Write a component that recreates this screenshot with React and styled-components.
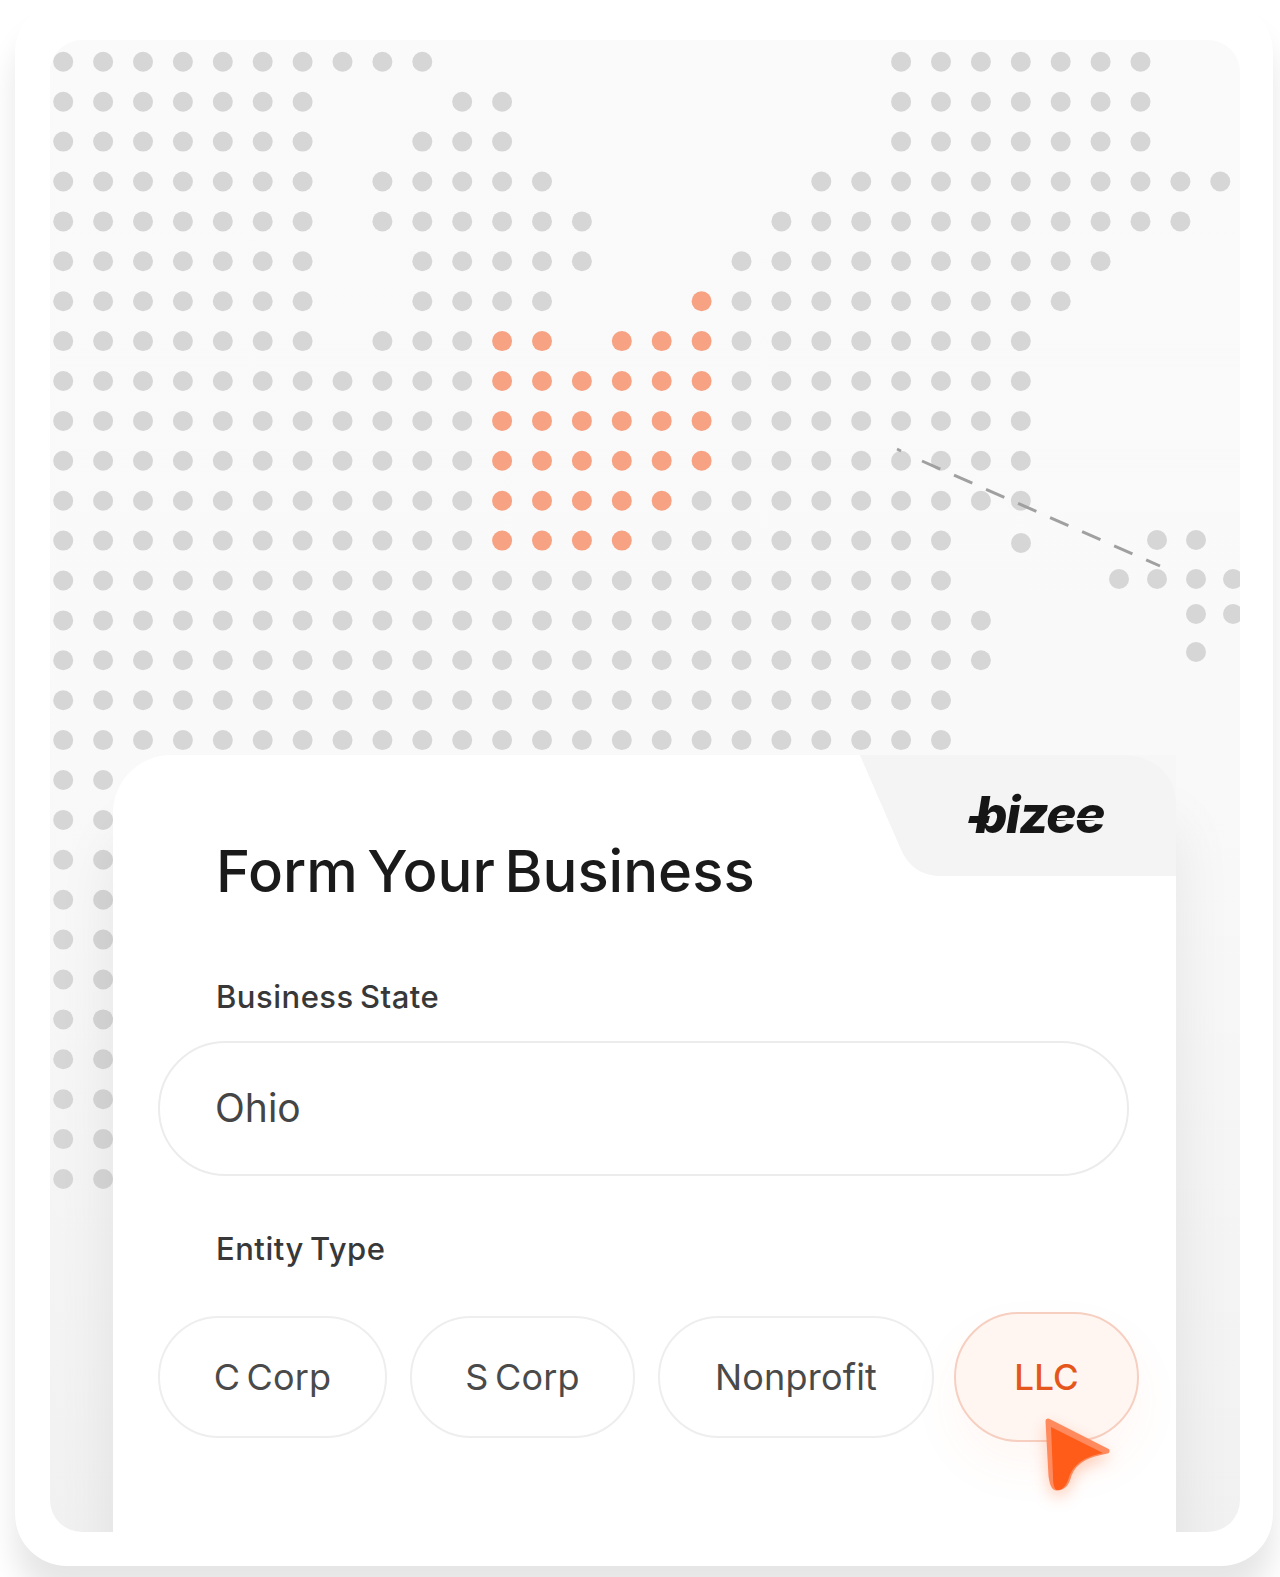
import React from "react";
import styled, { createGlobalStyle } from "styled-components";

const Global = createGlobalStyle`
  html, body { margin: 0; padding: 0; background: #fff; }
  body { font-family: "Inter", "Liberation Sans", sans-serif; }
  * { box-sizing: border-box; }
`;

const Page = styled.div`
  width: 1280px;
  height: 1577px;
  padding: 0 7px 11px 15px;
  overflow: hidden;
  background: #fff;
`;

const Shell = styled.div`
  height: 1566px;
  padding: 40px 33px 34px 35px;
  background: #fff;
  border-radius: 52px;
  box-shadow: 0 30px 30px rgba(0, 0, 0, 0.1);
`;

const Panel = styled.div`
  height: 1492px;
  display: grid;
  grid-template: 1fr / 1fr;
  overflow: hidden;
  border-radius: 32px;
  background: linear-gradient(180deg, #fafafa 0%, #f9f9f9 50%, #f1f1f1 100%);
`;

const MapSvg = styled.svg`
  grid-area: 1 / 1;
  display: block;
  width: 1190px;
  height: 1200px;
  filter: blur(0.4px);
`;

const FormCard = styled.section`
  grid-area: 1 / 1;
  position: relative;
  margin: 715px 64px 0 63px;
  padding: 81px 0 0 45px;
  background: #fff;
  border-radius: 58px 0 0 0;
  box-shadow: 0 70px 60px rgba(0, 0, 0, 0.08);
`;

const Tab = styled.div`
  position: absolute;
  top: 0;
  right: 0;
  width: 316px;
  height: 121px;
`;

const TabShape = styled.svg`
  position: absolute;
  inset: 0;
  display: block;
`;

const Logo = styled.div`
  position: absolute;
  left: 115px;
  top: 30px;
  font-family: "Inter", "Liberation Sans", sans-serif;
  font-size: 51px;
  line-height: 60px;
  font-weight: 800;
  font-style: italic;
  letter-spacing: -1.4px;
  color: #161616;
  &::after {
    content: "";
    position: absolute;
    left: 82px;
    top: 33px;
    width: 60px;
    height: 2px;
    background: #f4f4f4;
  }
`;

const LogoBar = styled.span`
  position: absolute;
  left: -6px;
  top: 31px;
  width: 20px;
  height: 7px;
  background: #161616;
  transform: skewX(-14deg);
`;

const Title = styled.h1`
  margin: 0 0 0 58px;
  font-size: 58px;
  line-height: 70px;
  font-weight: 500;
  word-spacing: -6px;
  color: #1a1a1a;
`;

const Label = styled.div`
  margin: ${(p) => p.$top}px 0 0 58px;
  font-size: 31px;
  line-height: 40px;
  font-weight: 500;
  letter-spacing: 0.5px;
  word-spacing: -2.5px;
  color: #383838;
`;

const Field = styled.div`
  width: 971px;
  height: 135px;
  margin-top: 24px;
  padding: 0 0 2px 55px;
  display: flex;
  align-items: center;
  border: 2px solid #ececec;
  border-radius: 68px;
  font-size: 39px;
  font-weight: 400;
  color: #454545;
`;

const PillRow = styled.div`
  display: flex;
  align-items: center;
  gap: 23px;
  height: 122px;
  margin-top: 47px;
`;

const Pill = styled.div`
  flex: none;
  width: ${(p) => p.$w}px;
  height: 122px;
  display: flex;
  align-items: center;
  justify-content: center;
  border: 2px solid #eeeeee;
  border-radius: 61px;
  background: #fff;
  font-size: 36px;
  letter-spacing: 0.2px;
  word-spacing: -4px;
  color: #4a4a4a;
`;

const ActivePill = styled.div`
  position: relative;
  flex: none;
  width: 185px;
  height: 130px;
  margin-left: -3px;
  display: flex;
  align-items: center;
  justify-content: center;
  border: 2px solid #f6cfc0;
  border-radius: 65px;
  background: #fff6f2;
  box-shadow: 0 24px 50px rgba(255, 120, 60, 0.06);
  font-size: 35px;
  font-weight: 500;
  color: #e5561c;
`;

const Cursor = styled.svg`
  position: absolute;
  left: 87px;
  top: 100px;
  overflow: visible;
  filter: drop-shadow(0 6px 8px rgba(255, 95, 31, 0.3));
`;

const RANGES = [
  [[0, 9], [21, 27]],
  [[0, 6], [10, 11], [21, 27]],
  [[0, 6], [9, 11], [21, 27]],
  [[0, 6], [8, 12], [19, 29]],
  [[0, 6], [8, 13], [18, 28]],
  [[0, 6], [9, 13], [17, 26]],
  [[0, 6], [9, 12], [17, 25]],
  [[0, 6], [8, 10], [17, 24]],
  [[0, 10], [17, 24]],
  [[0, 10], [17, 24]],
  [[0, 10], [17, 24]],
  [[0, 10], [16, 24]],
  [[0, 10], [15, 22]],
  [[0, 22]],
  [[0, 23]],
  [[0, 23]],
  [[0, 22]],
  [[0, 22]],
];

const ORANGE = [
  [6, [[16, 16]]],
  [7, [[11, 12], [14, 16]]],
  [8, [[11, 16]]],
  [9, [[11, 16]]],
  [10, [[11, 16]]],
  [11, [[11, 15]]],
  [12, [[11, 14]]],
];

const EXTRA = [
  [1021, 543], [1157, 540], [1196, 540],
  [1119, 579], [1157, 579], [1196, 579], [1233, 579],
  [1196, 614], [1233, 614], [1196, 652],
];

const PITCH = 39.9;
const cx = (c) => 13.2 + c * PITCH;
const cy = (r) => 21.8 + r * PITCH;

function expand(ranges) {
  const out = [];
  ranges.forEach(([a, b]) => {
    for (let c = a; c <= b; c++) out.push(c);
  });
  return out;
}

function DotMap() {
  const gray = [];
  RANGES.forEach((ranges, r) => {
    expand(ranges).forEach((c) => gray.push([cx(c), cy(r)]));
  });
  for (let r = 18; r <= 28; r++) {
    gray.push([cx(0), cy(r)], [cx(1), cy(r)]);
  }
  EXTRA.forEach(([x, y]) => gray.push([x - 50, y - 40]));
  const orange = [];
  ORANGE.forEach(([r, ranges]) => {
    expand(ranges).forEach((c) => orange.push([cx(c), cy(r)]));
  });
  return (
    <MapSvg viewBox="0 0 1190 1200">
      {gray.map(([x, y], i) => (
        <circle key={i} cx={x} cy={y} r="10" fill="#d6d6d6" />
      ))}
      {orange.map(([x, y], i) => (
        <circle key={i} cx={x} cy={y} r="10" fill="#f6a283" />
      ))}
      <line x1="847" y1="409" x2="851" y2="411" stroke="#a0a0a0" strokeWidth="2.6" />
      <line
        x1="872"
        y1="421"
        x2="1110"
        y2="526"
        stroke="#a0a0a0"
        strokeWidth="3"
        strokeDasharray="20 15"
      />
    </MapSvg>
  );
}

export default function App() {
  return (
    <>
      <Global />
      <Page>
        <Shell>
          <Panel>
            <DotMap />
            <FormCard>
              <Tab>
                <TabShape width="316" height="121" viewBox="0 0 316 121">
                  <path d="M0 0H316V121H82C62 121 48 112 40 92Z" fill="#f7f7f7" />
                  <path
                    d="M0 0H262C294 0 316 20 316 48V121H82C62 121 48 112 40 92Z"
                    fill="#f4f4f4"
                  />
                </TabShape>
                <Logo>
                  <LogoBar />
                  bizee
                </Logo>
              </Tab>
              <Title>Form Your Business</Title>
              <Label $top={71}>Business State</Label>
              <Field>Ohio</Field>
              <Label $top={53}>Entity Type</Label>
              <PillRow>
                <Pill $w={229}>C Corp</Pill>
                <Pill $w={225}>S Corp</Pill>
                <Pill $w={276}>Nonprofit</Pill>
                <ActivePill>
                  LLC
                  <Cursor width="70" height="78" viewBox="0 0 70 78">
                    <path
                      d="M5 7L64 37C48 40 32 45 26 61C24 70 20 74 14 74C10 74 9 68 8 62Z"
                      fill="#ff8a5e"
                      stroke="#ff8a5e"
                      strokeWidth="5"
                      strokeLinejoin="round"
                    />
                    <path
                      d="M8 13L60 39C46 42 32 47 26 63C24 71 19 77 14 76C11 75 10 70 10 62Z"
                      fill="#ff5c1a"
                    />
                  </Cursor>
                </ActivePill>
              </PillRow>
            </FormCard>
          </Panel>
        </Shell>
      </Page>
    </>
  );
}
